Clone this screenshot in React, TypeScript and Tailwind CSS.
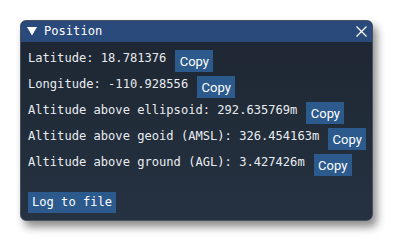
const rows = [
  { label: 'Latitude: 18.781376' },
  { label: 'Longitude: -110.928556' },
  { label: 'Altitude above ellipsoid: 292.635769m' },
  { label: 'Altitude above geoid (AMSL): 326.454163m' },
  { label: 'Altitude above ground (AGL): 3.427426m' },
];

const mono = "font-['DejaVu_Sans_Mono',monospace] text-[12.1px]";

export default function App() {
  return (
    <div className="w-[394px] h-[242px] bg-white pt-[20px] pl-[20px]">
      <div className="w-[353px] h-[201px] rounded-[6px] border border-[#4a5262] bg-gradient-to-b from-[#1d2631] to-[#263242] shadow-[4px_6px_8px_rgba(0,0,0,0.45)] overflow-hidden flex flex-col">
        {/* Title bar */}
        <div className={`h-[21px] bg-[#2a4a7b] flex items-center pl-[6px] pr-[5px] text-white ${mono}`}>
          <svg width="10" height="9" viewBox="0 0 10 9" className="shrink-0">
            <polygon points="0,0 10,0 5,8.5" fill="white" />
          </svg>
          <span className="ml-[7px] leading-none">Position</span>
          <svg width="11" height="11" viewBox="0 0 11 11" className="ml-auto">
            <path d="M0.5 0.5L10.5 10.5M10.5 0.5L0.5 10.5" stroke="white" strokeWidth="1.3" />
          </svg>
        </div>

        {/* Body */}
        <div className="flex-1 flex flex-col pt-[8px] pl-[7px] pb-[7px]">
          <div className="flex flex-col gap-[4px]">
            {rows.map((r) => (
              <div key={r.label} className="flex items-start h-[22px]">
                <span className={`text-[#e8ecf0] leading-[16px] whitespace-pre ${mono}`}>{r.label}</span>
                <button className="ml-[9px] w-[38px] h-[22px] bg-[#2c5a8d] text-white text-[13px] font-['Roboto',sans-serif] leading-none pt-[1px]">
                  Copy
                </button>
              </div>
            ))}
          </div>
          <div className="mt-auto">
            <button className={`h-[21px] px-[4px] bg-[#2c5a8d] text-white leading-none ${mono}`}>
              Log to file
            </button>
          </div>
        </div>
      </div>
    </div>
  );
}
